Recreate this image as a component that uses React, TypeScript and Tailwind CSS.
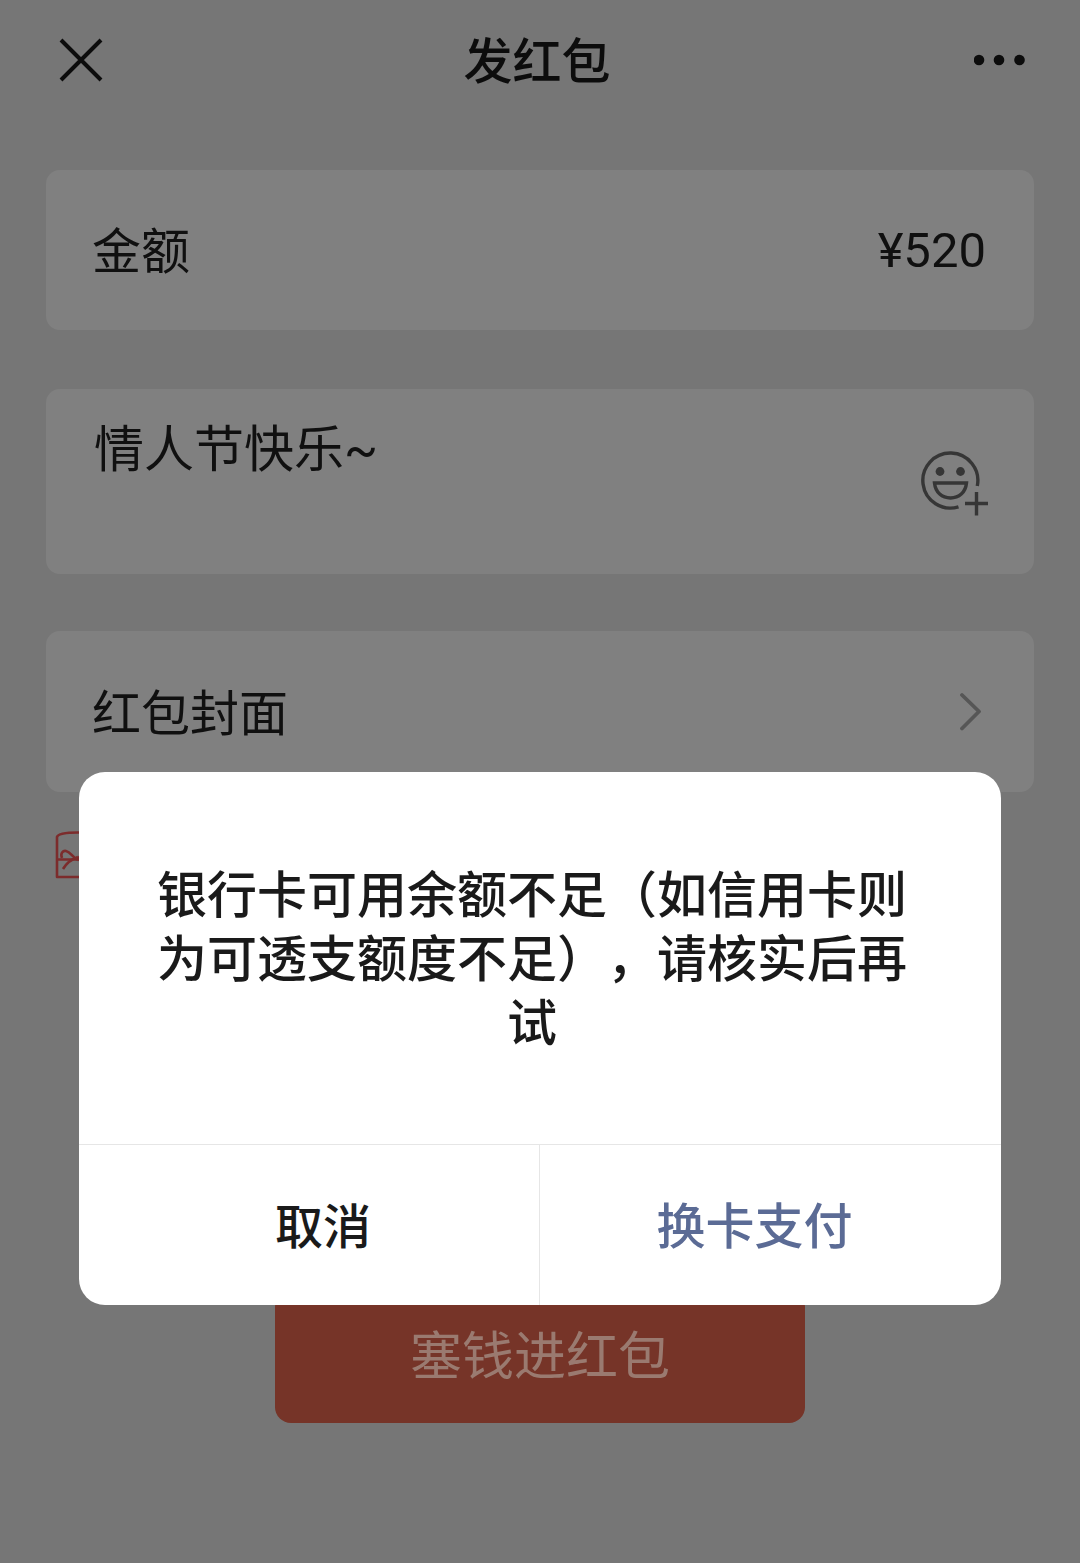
import React from "react";

function CloseIcon() {
  return (
    <svg width="44" height="44" viewBox="0 0 44 44" fill="none" stroke="#0c0c0c" strokeWidth="4" aria-hidden="true">
      <path d="M2 2 42 42M42 2 2 42" />
    </svg>
  );
}

function MoreIcon() {
  return (
    <svg width="52" height="12" viewBox="0 0 52 12" fill="#0c0c0c" aria-hidden="true">
      <circle cx="5" cy="6" r="5.3" />
      <circle cx="25" cy="6" r="5.3" />
      <circle cx="45.5" cy="6" r="5.3" />
    </svg>
  );
}

function EmojiAddIcon() {
  return (
    <svg width="68" height="66" viewBox="0 0 68 66" fill="none" stroke="#363636" strokeWidth="3.4" aria-hidden="true">
      <path d="M56.3 35A27.5 27.5 0 1 0 37.5 55.8" />
      <circle cx="19" cy="20.5" r="4.4" fill="#363636" stroke="none" />
      <circle cx="39.5" cy="20.5" r="4.4" fill="#363636" stroke="none" />
      <path d="M13.5 32H45.5C44.5 41.5 38 47 29.500 47S14.5 41.5 13.5 32Z" />
      <path d="M55.5 41V64.5M44 52.5H67" />
    </svg>
  );
}

function ChevronIcon() {
  return (
    <svg width="22" height="40" viewBox="0 0 22 40" fill="none" stroke="#565656" strokeWidth="3.8" strokeLinecap="round" strokeLinejoin="round" aria-hidden="true">
      <path d="M2 3 19 19.5 2 36.5" />
    </svg>
  );
}

function GiftEnvelopeIcon() {
  return (
    <svg width="46" height="48" viewBox="0 0 46 48" fill="none" stroke="#7c2c2c" strokeWidth="2.6" strokeLinejoin="round" aria-hidden="true">
      <path d="M2 46V6C3 3 12 1.5 23 1.5S43 3 44 6V46Z" />
      <path d="M2 28.5H44" />
      <path d="M7 27C5 22 8 19.5 11 20 16 21 17 26 23 29M23 26C17 28 11 33 8 38" />
      <path d="M39 27C41 22 38 19.5 35 20 30 21 29 26 23 29M23 26C29 28 35 33 38 38" />
    </svg>
  );
}

export default function App() {
  return (
    <div className="relative min-h-screen bg-[#767676] pb-[141px] font-['Noto_Sans_CJK_SC',sans-serif] text-[50px] text-[#101010]">
      <header className="flex h-[120px] items-center justify-between pr-[54px] pl-[56px]">
        <button type="button" aria-label="关闭" className="flex w-12 justify-start pl-[3px]">
          <CloseIcon />
        </button>
        <h1 className="pb-1 text-[49px] leading-[60px] font-medium text-[#0c0c0c]">发红包</h1>
        <button type="button" aria-label="更多" className="flex w-14 justify-end">
          <MoreIcon />
        </button>
      </header>

      <main className="flex flex-col px-[46px] pt-[50px]">
        <div className="flex h-40 items-center justify-between rounded-[14px] bg-[#808080] pr-12 pl-[46px]">
          <label htmlFor="amount" className="shrink-0 pb-1 text-[49px] leading-[60px]">
            金额
          </label>
          <input
            id="amount"
            defaultValue="¥520"
            className="w-64 bg-transparent pt-0.5 text-right font-['Roboto',sans-serif] text-[49px] leading-[60px] outline-none"
          />
        </div>

        <div className="mt-[59px] flex h-[185px] items-start justify-between rounded-[14px] bg-[#808080] pr-[45px] pl-12">
          <textarea
            aria-label="祝福语"
            defaultValue="情人节快乐~"
            className="h-[160px] min-w-0 flex-1 resize-none bg-transparent pt-[31px] font-['Roboto','Noto_Sans_CJK_SC',sans-serif] leading-[60px] outline-none"
          />
          <button type="button" aria-label="添加表情" className="pt-[62px]">
            <EmojiAddIcon />
          </button>
        </div>

        <button
          type="button"
          className="mt-[57px] flex h-[161px] items-center justify-between rounded-[14px] bg-[#808080] pr-[52px] pl-[46px] text-[49px] leading-[60px]"
        >
          <span className="pb-1">红包封面</span>
          <ChevronIcon />
        </button>

        <div className="mt-[39px] pl-[9px]">
          <GiftEnvelopeIcon />
        </div>

        <button
          type="button"
          className="mt-[412px] h-[132px] w-[530px] self-center rounded-[16px] bg-[#763428] pb-2 text-[52px] leading-[60px] text-[#9a7a70]"
        >
          塞钱进红包
        </button>
      </main>

      <div className="absolute inset-0 flex items-start justify-center px-[79px] pt-[772px]">
        <section
          role="alertdialog"
          aria-modal="true"
          aria-describedby="dialog-message"
          className="flex w-full flex-col overflow-hidden rounded-[26px] bg-white"
        >
          <p
            id="dialog-message"
            className="pt-[87px] pr-[88px] pb-[93px] pl-[72px] text-center leading-[64px] font-medium text-[#1a1a1a] [text-spacing-trim:space-all]"
          >
            银行卡可用余额不足（如信用卡则为可透支额度不足），请核实后再试
          </p>
          <div className="grid h-[161px] grid-cols-2 border-t border-[#e6e6e6]">
            <button
              type="button"
              className="border-r border-[#e6e6e6] pb-1 pl-7 text-[48px] font-medium text-[#1a1a1a]"
            >
              取消
            </button>
            <button type="button" className="pr-8 pb-1 text-[49px] font-medium text-[#5b6b95]">
              换卡支付
            </button>
          </div>
        </section>
      </div>
    </div>
  );
}
